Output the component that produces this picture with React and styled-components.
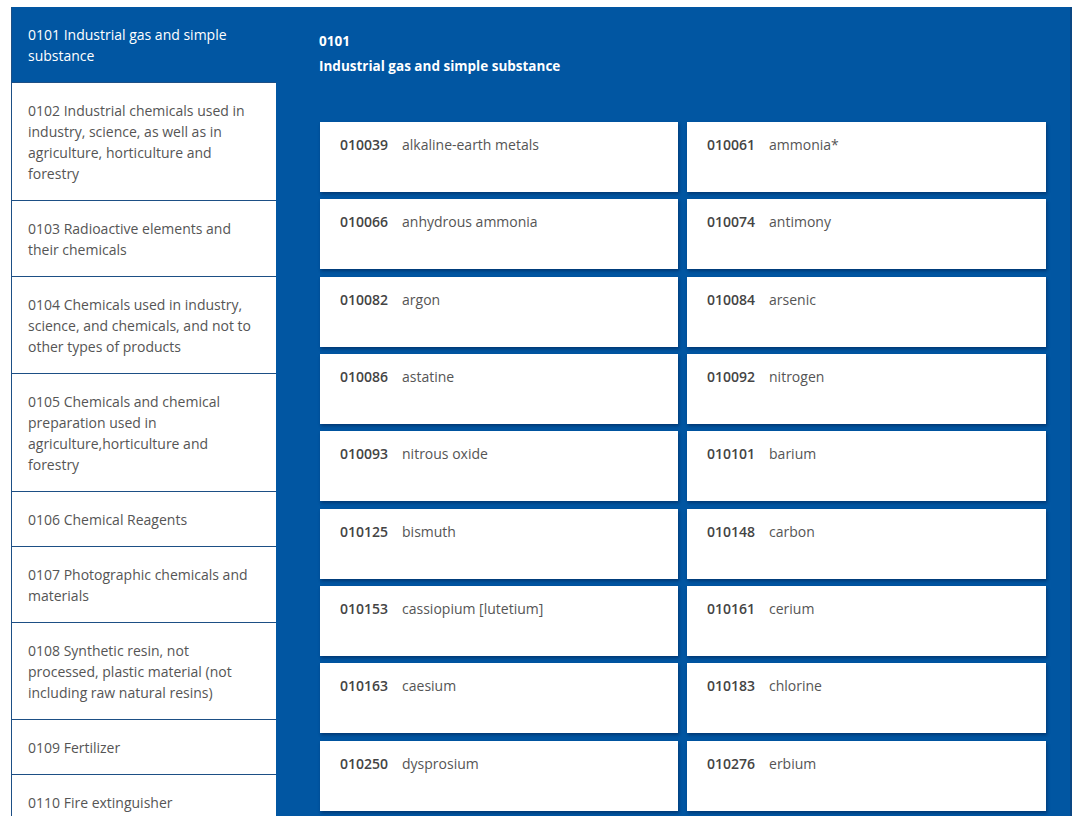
import React from "react";
import styled, { createGlobalStyle } from "styled-components";

const Global = createGlobalStyle`
  html, body { margin: 0; padding: 0; background: #fff; }
  body { font-family: "Open Sans", "Liberation Sans", sans-serif; font-size: 14px; }
  * { box-sizing: border-box; }
`;

const Page = styled.div`
  padding: 7px 0 0 11px;
  width: 1080px;
  height: 816px;
  overflow: hidden;
`;

const Frame = styled.div`
  display: flex;
  width: 1061px;
  background: #0156a2;
  border-right: 2px solid #0a4784;
  min-height: 809px;
`;

const Sidebar = styled.nav`
  width: 265px;
  flex: none;
  background: #fff;
  border-left: 1px solid #1d4f85;
  align-self: flex-start;
`;

const NavItem = styled.div`
  padding: 17px 16px 16px 16px;
  border-bottom: 1px solid #1d4f85;
  line-height: 21px;
  font-size: 14px;
  color: ${(p) => (p.$active ? "#fff" : "#555")};
  background: ${(p) => (p.$active ? "#0156a2" : "#fff")};
`;

const Main = styled.main`
  flex: 1;
  padding: 22px 22px 0 43px;
`;

const Heading = styled.div`
  color: #fff;
  font-weight: 700;
  font-size: 13.5px;
  line-height: 25px;
`;

const Grid = styled.div`
  margin: 43px 0 0 1px;
  display: grid;
  grid-template-columns: 358px 359px;
  column-gap: 9px;
  row-gap: 7.33px;
`;

const Card = styled.div`
  height: 70px;
  background: #fff;
  padding: 12px 20px 0 20px;
  line-height: 21px;
  font-size: 14px;
  box-shadow: 1px 2px 3px rgba(0, 20, 60, 0.45);
  display: flex;
  gap: 14px;
  align-items: flex-start;
`;

const Code = styled.span`
  font-weight: 600;
  color: #444;
`;

const Name = styled.span`
  color: #555;
`;

const nav = [
  "0101 Industrial gas and simple substance",
  "0102 Industrial chemicals used in industry, science, as well as in agriculture, horticulture and forestry",
  "0103 Radioactive elements and their chemicals",
  "0104 Chemicals used in industry, science, and chemicals, and not to other types of products",
  "0105 Chemicals and chemical preparation used in agriculture,horticulture and forestry",
  "0106 Chemical Reagents",
  "0107 Photographic chemicals and materials",
  "0108 Synthetic resin, not processed, plastic material (not including raw natural resins)",
  "0109 Fertilizer",
  "0110 Fire extinguisher",
];

const items = [
  ["010039", "alkaline-earth metals"],
  ["010061", "ammonia*"],
  ["010066", "anhydrous ammonia"],
  ["010074", "antimony"],
  ["010082", "argon"],
  ["010084", "arsenic"],
  ["010086", "astatine"],
  ["010092", "nitrogen"],
  ["010093", "nitrous oxide"],
  ["010101", "barium"],
  ["010125", "bismuth"],
  ["010148", "carbon"],
  ["010153", "cassiopium [lutetium]"],
  ["010161", "cerium"],
  ["010163", "caesium"],
  ["010183", "chlorine"],
  ["010250", "dysprosium"],
  ["010276", "erbium"],
];

export default function App() {
  return (
    <Page>
      <Global />
      <Frame>
        <Sidebar>
          {nav.map((t, i) => (
            <NavItem key={t} $active={i === 0}>
              {t}
            </NavItem>
          ))}
        </Sidebar>
        <Main>
          <Heading>0101</Heading>
          <Heading>Industrial gas and simple substance</Heading>
          <Grid>
            {items.map(([c, n]) => (
              <Card key={c}>
                <Code>{c}</Code>
                <Name>{n}</Name>
              </Card>
            ))}
          </Grid>
        </Main>
      </Frame>
    </Page>
  );
}
